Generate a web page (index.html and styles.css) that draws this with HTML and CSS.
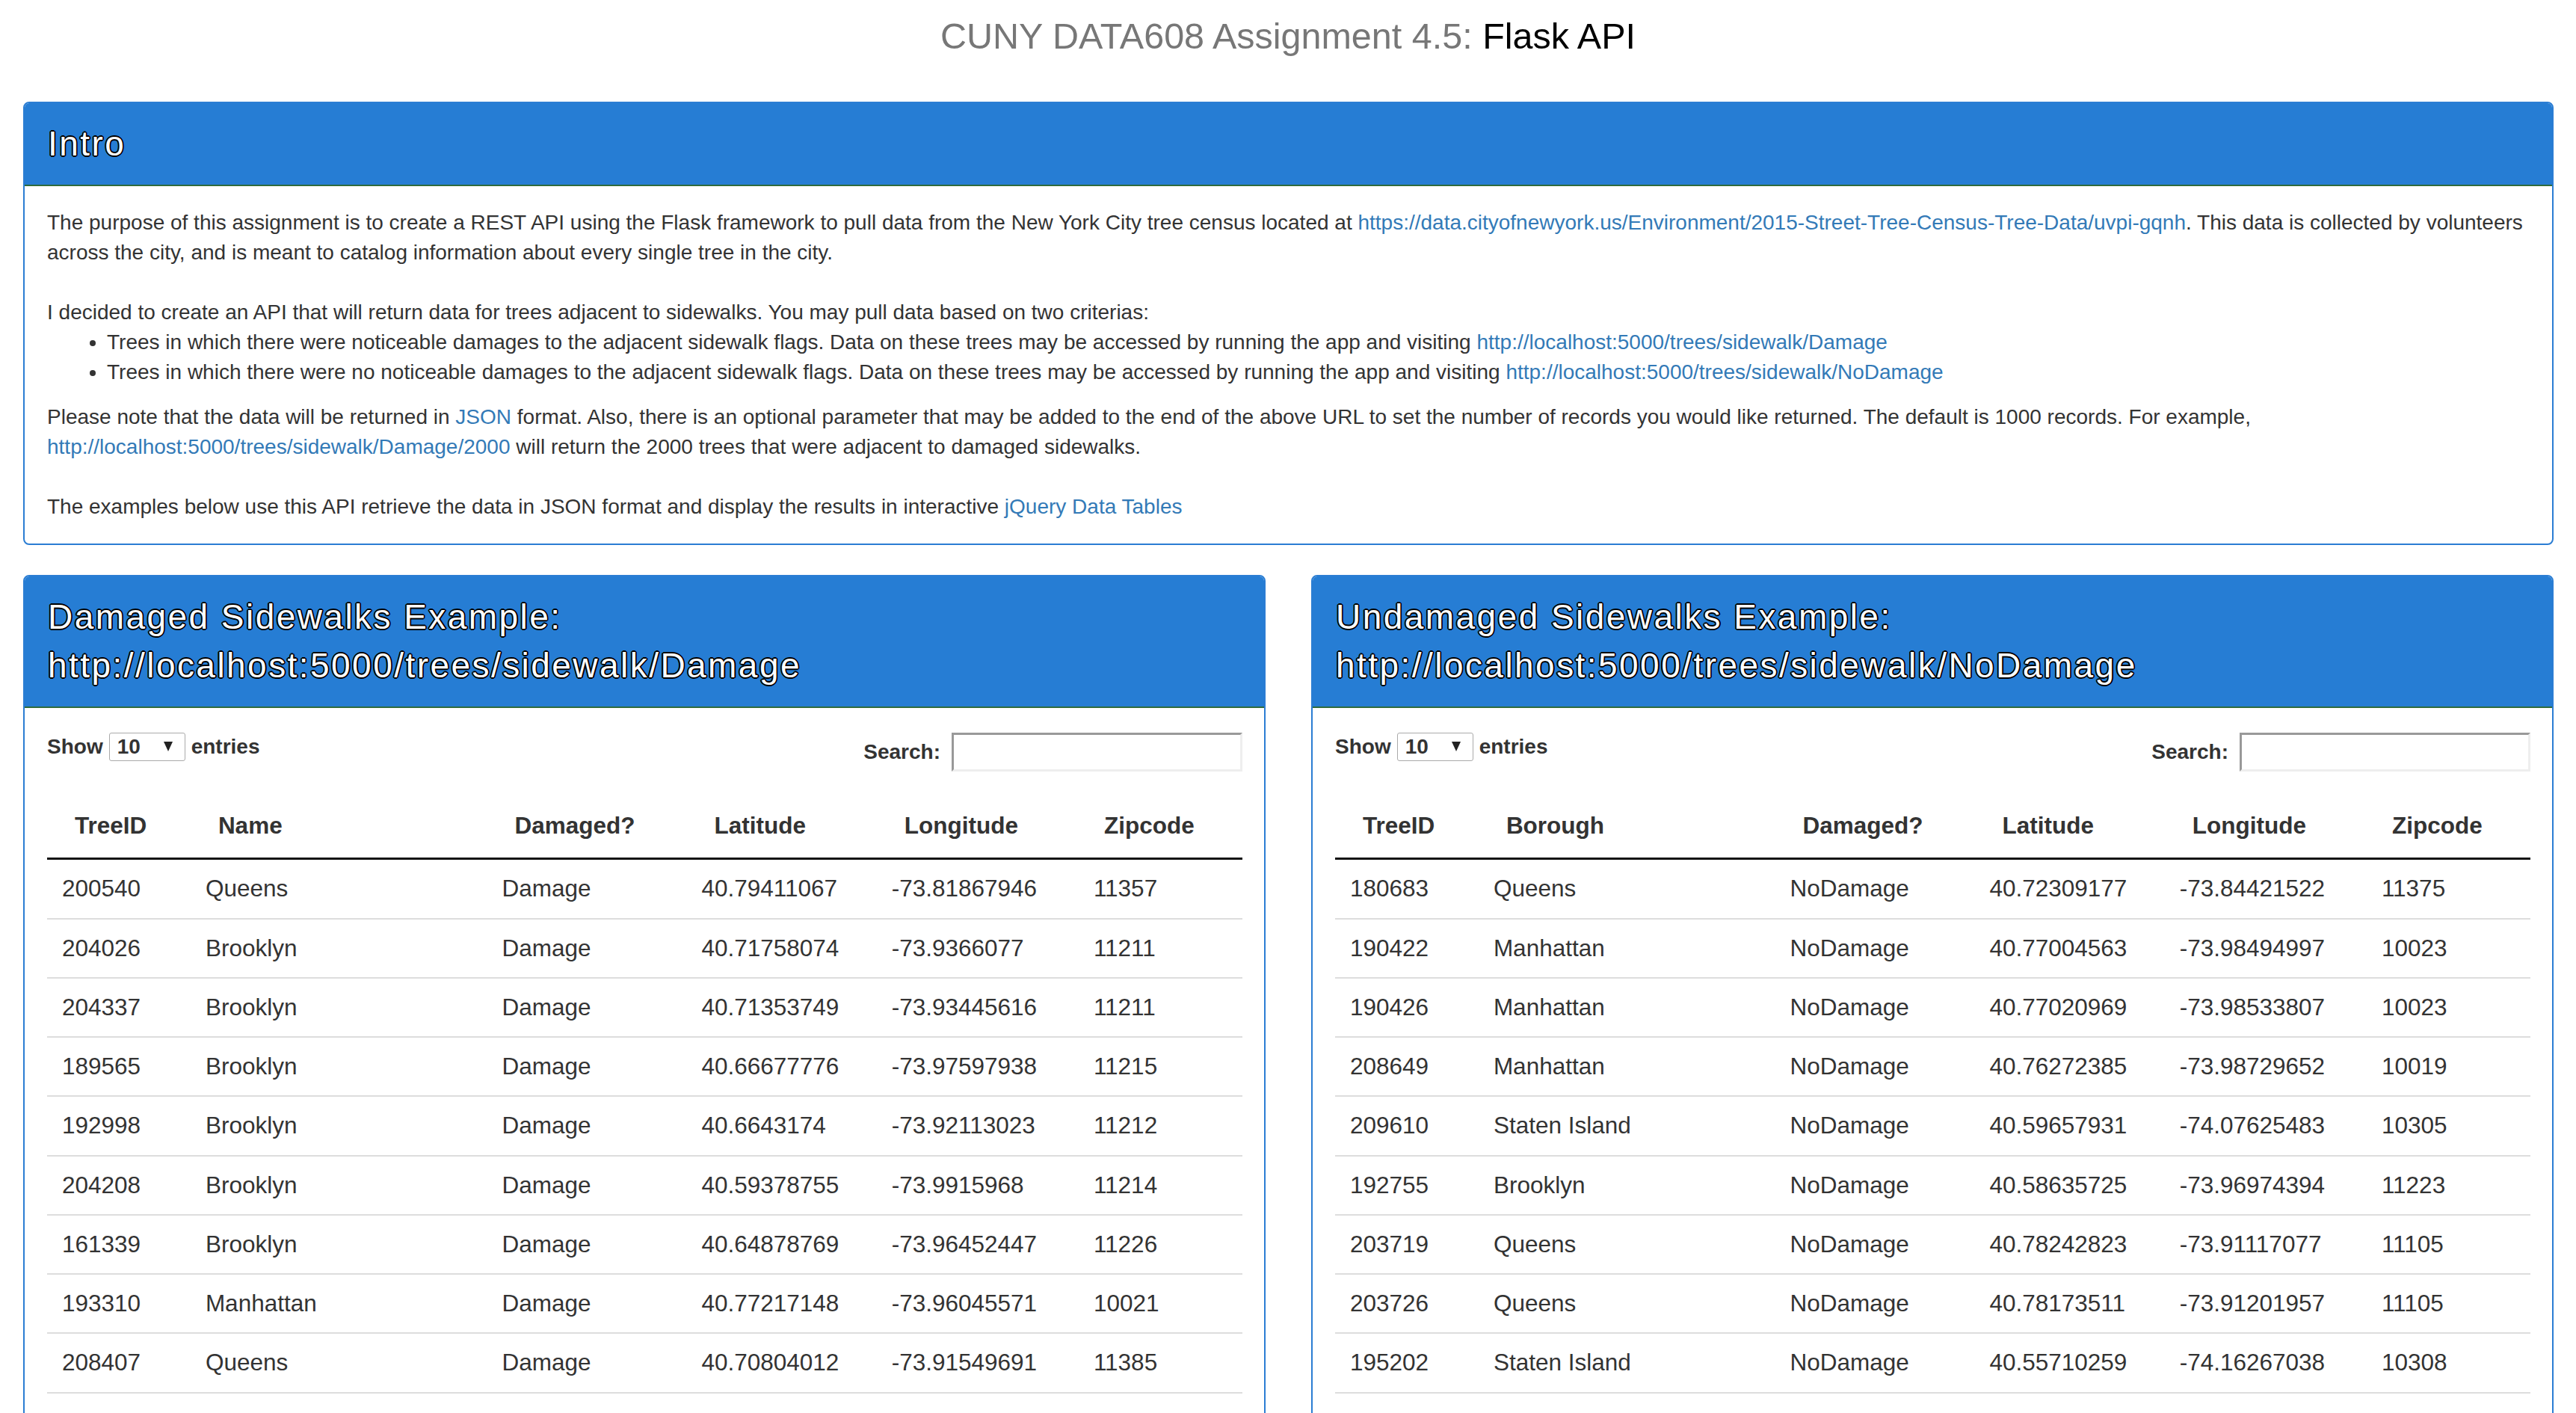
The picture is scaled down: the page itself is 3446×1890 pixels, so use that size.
FILE: index.html
```html
<!DOCTYPE html>
<html lang="en">
<head>
<meta charset="utf-8">
<title>CUNY DATA608 Assignment 4.5: Flask API</title>
<link rel="stylesheet" href="styles.css">
</head>
<body>
<h1 class="page-title"><span class="muted">CUNY DATA608 Assignment 4.5:</span> Flask API</h1>
<main class="page">
  <section class="panel">
    <h2 class="panel-heading">Intro</h2>
    <div class="panel-body intro">
      <p class="gap-after">The purpose of this assignment is to create a REST API using the Flask framework to pull data from the New York City tree census located at <a href="#">https://data.cityofnewyork.us/Environment/2015-Street-Tree-Census-Tree-Data/uvpi-gqnh</a>. This data is collected by volunteers across the city, and is meant to catalog information about every single tree in the city.</p>
      <p>I decided to create an API that will return data for trees adjacent to sidewalks. You may pull data based on two criterias:</p>
      <ul class="criteria">
        <li>Trees in which there were noticeable damages to the adjacent sidewalk flags. Data on these trees may be accessed by running the app and visiting <a href="#">http://localhost:5000/trees/sidewalk/Damage</a></li>
        <li>Trees in which there were no noticeable damages to the adjacent sidewalk flags. Data on these trees may be accessed by running the app and visiting <a href="#">http://localhost:5000/trees/sidewalk/NoDamage</a></li>
      </ul>
      <p class="gap-after">Please note that the data will be returned in <a href="#">JSON</a> format. Also, there is an optional parameter that may be added to the end of the above URL to set the number of records you would like returned. The default is 1000 records. For example, <a href="#">http://localhost:5000/trees/sidewalk/Damage/2000</a> will return the 2000 trees that were adjacent to damaged sidewalks.</p>
      <p>The examples below use this API retrieve the data in JSON format and display the results in interactive <a href="#">jQuery Data Tables</a></p>
    </div>
  </section>

  <div class="examples">
    <section class="panel">
      <h2 class="panel-heading">Damaged Sidewalks Example:<br>http://localhost:5000/trees/sidewalk/Damage</h2>
      <div class="panel-body">
        <div class="dt-controls">
          <label class="dt-length">Show <span class="select-wrap"><select class="length-select"><option>10</option><option>25</option><option>50</option><option>100</option></select></span> entries</label>
          <label class="dt-filter">Search: <input type="search" class="search-input"></label>
        </div>
        <table class="data-table">
          <colgroup><col class="c-id"><col class="c-name"><col class="c-dmg"><col class="c-lat"><col class="c-lon"><col class="c-zip"></colgroup>
          <thead><tr><th>TreeID</th><th>Name</th><th>Damaged?</th><th>Latitude</th><th>Longitude</th><th>Zipcode</th></tr></thead>
          <tbody>
            <tr><td>200540</td><td>Queens</td><td>Damage</td><td>40.79411067</td><td>-73.81867946</td><td>11357</td></tr>
            <tr><td>204026</td><td>Brooklyn</td><td>Damage</td><td>40.71758074</td><td>-73.9366077</td><td>11211</td></tr>
            <tr><td>204337</td><td>Brooklyn</td><td>Damage</td><td>40.71353749</td><td>-73.93445616</td><td>11211</td></tr>
            <tr><td>189565</td><td>Brooklyn</td><td>Damage</td><td>40.66677776</td><td>-73.97597938</td><td>11215</td></tr>
            <tr><td>192998</td><td>Brooklyn</td><td>Damage</td><td>40.6643174</td><td>-73.92113023</td><td>11212</td></tr>
            <tr><td>204208</td><td>Brooklyn</td><td>Damage</td><td>40.59378755</td><td>-73.9915968</td><td>11214</td></tr>
            <tr><td>161339</td><td>Brooklyn</td><td>Damage</td><td>40.64878769</td><td>-73.96452447</td><td>11226</td></tr>
            <tr><td>193310</td><td>Manhattan</td><td>Damage</td><td>40.77217148</td><td>-73.96045571</td><td>10021</td></tr>
            <tr><td>208407</td><td>Queens</td><td>Damage</td><td>40.70804012</td><td>-73.91549691</td><td>11385</td></tr>
            <tr><td>204303</td><td>Staten Island</td><td>Damage</td><td>40.59383517</td><td>-74.10003215</td><td>10306</td></tr>
          </tbody>
        </table>
        <div class="dt-info">Showing 1 to 10 of 1,000 entries</div>
      </div>
    </section>

    <section class="panel">
      <h2 class="panel-heading">Undamaged Sidewalks Example:<br>http://localhost:5000/trees/sidewalk/NoDamage</h2>
      <div class="panel-body">
        <div class="dt-controls">
          <label class="dt-length">Show <span class="select-wrap"><select class="length-select"><option>10</option><option>25</option><option>50</option><option>100</option></select></span> entries</label>
          <label class="dt-filter">Search: <input type="search" class="search-input"></label>
        </div>
        <table class="data-table">
          <colgroup><col class="c-id"><col class="c-name"><col class="c-dmg"><col class="c-lat"><col class="c-lon"><col class="c-zip"></colgroup>
          <thead><tr><th>TreeID</th><th>Borough</th><th>Damaged?</th><th>Latitude</th><th>Longitude</th><th>Zipcode</th></tr></thead>
          <tbody>
            <tr><td>180683</td><td>Queens</td><td>NoDamage</td><td>40.72309177</td><td>-73.84421522</td><td>11375</td></tr>
            <tr><td>190422</td><td>Manhattan</td><td>NoDamage</td><td>40.77004563</td><td>-73.98494997</td><td>10023</td></tr>
            <tr><td>190426</td><td>Manhattan</td><td>NoDamage</td><td>40.77020969</td><td>-73.98533807</td><td>10023</td></tr>
            <tr><td>208649</td><td>Manhattan</td><td>NoDamage</td><td>40.76272385</td><td>-73.98729652</td><td>10019</td></tr>
            <tr><td>209610</td><td>Staten Island</td><td>NoDamage</td><td>40.59657931</td><td>-74.07625483</td><td>10305</td></tr>
            <tr><td>192755</td><td>Brooklyn</td><td>NoDamage</td><td>40.58635725</td><td>-73.96974394</td><td>11223</td></tr>
            <tr><td>203719</td><td>Queens</td><td>NoDamage</td><td>40.78242823</td><td>-73.91117077</td><td>11105</td></tr>
            <tr><td>203726</td><td>Queens</td><td>NoDamage</td><td>40.78173511</td><td>-73.91201957</td><td>11105</td></tr>
            <tr><td>195202</td><td>Staten Island</td><td>NoDamage</td><td>40.55710259</td><td>-74.16267038</td><td>10308</td></tr>
            <tr><td>190165</td><td>Brooklyn</td><td>NoDamage</td><td>40.62478944</td><td>-73.98334054</td><td>11225</td></tr>
          </tbody>
        </table>
        <div class="dt-info">Showing 1 to 10 of 1,000 entries</div>
      </div>
    </section>
  </div>
</main>
</body>
</html>
```
FILE: styles.css
```css
html, body {
  margin: 0;
  padding: 0;
}

body {
  font-family: "Liberation Sans", Arial, Helvetica, sans-serif;
  color: #333;
  background: #fff;
  font-size: 28px;
  line-height: 40px;
}

a {
  color: #337ab7;
  text-decoration: none;
}

.page-title {
  margin: 21px 0 61px;
  font-size: 48.5px;
  line-height: 54px;
  font-weight: normal;
  text-align: center;
  color: #000;
}

.page-title .muted {
  color: #777;
}

.page {
  padding: 0 30px 40px 31px;
}

.panel {
  border: 2px solid #2b7dd3;
  border-radius: 8px;
  background: #fff;
  overflow: hidden;
}

.panel-heading {
  margin: 0;
  padding: 22px 31px;
  background: #267dd4;
  border-bottom: 2px solid #2f6b3c;
  color: #fff;
  font-size: 46px;
  line-height: 65px;
  font-weight: normal;
  letter-spacing: 2.45px;
  text-shadow:
    1.8px 0 0 #000, -1.8px 0 0 #000, 0 1.8px 0 #000, 0 -1.8px 0 #000,
    1.3px 1.3px 0 #000, -1.3px -1.3px 0 #000, 1.3px -1.3px 0 #000, -1.3px 1.3px 0 #000;
}

.panel-body {
  padding: 33px 29px 30px 30px;
}

.intro {
  padding: 28.5px 27px 29.5px 30px;
}

.intro p {
  margin: 0;
}

.intro p.gap-after {
  margin-bottom: 40px;
}

.criteria {
  margin: 0 0 20px;
  padding-left: 80px;
}

.examples {
  display: grid;
  grid-template-columns: 1fr 1fr;
  column-gap: 61px;
  margin-top: 40px;
  align-items: start;
}

.dt-controls {
  display: flex;
  justify-content: space-between;
  align-items: flex-start;
  font-weight: bold;
}

.dt-length {
  display: flex;
  align-items: center;
  gap: 8px;
  height: 38px;
  line-height: 38px;
}

.select-wrap {
  position: relative;
  display: block;
  height: 38px;
}

.length-select {
  -webkit-appearance: none;
  appearance: none;
  display: block;
  width: 102px;
  height: 38px;
  margin: 0;
  padding: 0 0 0 10px;
  border: 1px solid #aaa;
  border-radius: 3px;
  background: #fff;
  color: #333;
  font: inherit;
  line-height: 36px;
}

.select-wrap::after {
  content: "";
  position: absolute;
  right: 17px;
  top: 12px;
  border-left: 6px solid transparent;
  border-right: 6px solid transparent;
  border-top: 13px solid #222;
  pointer-events: none;
}

.dt-filter {
  display: flex;
  align-items: center;
  gap: 15px;
  height: 52px;
}

.search-input {
  box-sizing: border-box;
  width: 389px;
  height: 52px;
  margin: 0;
  border-style: solid;
  border-width: 3px;
  border-color: #999 #eee #eee #999;
  background: #fff;
  font: inherit;
}

.data-table {
  width: 100%;
  margin-top: 30px;
  border-collapse: separate;
  border-spacing: 0;
  table-layout: fixed;
  font-size: 31.5px;
  line-height: 35.25px;
}

.c-id { width: 12%; }
.c-name { width: 24.8%; }
.c-dmg { width: 16.7%; }
.c-lat { width: 15.9%; }
.c-lon { width: 16.9%; }
.c-zip { width: 13.7%; }

.data-table th {
  text-align: left;
  font-weight: bold;
  padding: 25px 8px 25px 37px;
  border-bottom: 3px solid #111;
  white-space: nowrap;
}

.data-table th:last-child {
  padding-left: 34px;
}

.data-table td {
  padding: 21px 8px 21px 20px;
  white-space: nowrap;
}

.data-table tbody tr + tr td {
  border-top: 2px solid #ddd;
}

.dt-info {
  padding-top: 20px;
}
```
